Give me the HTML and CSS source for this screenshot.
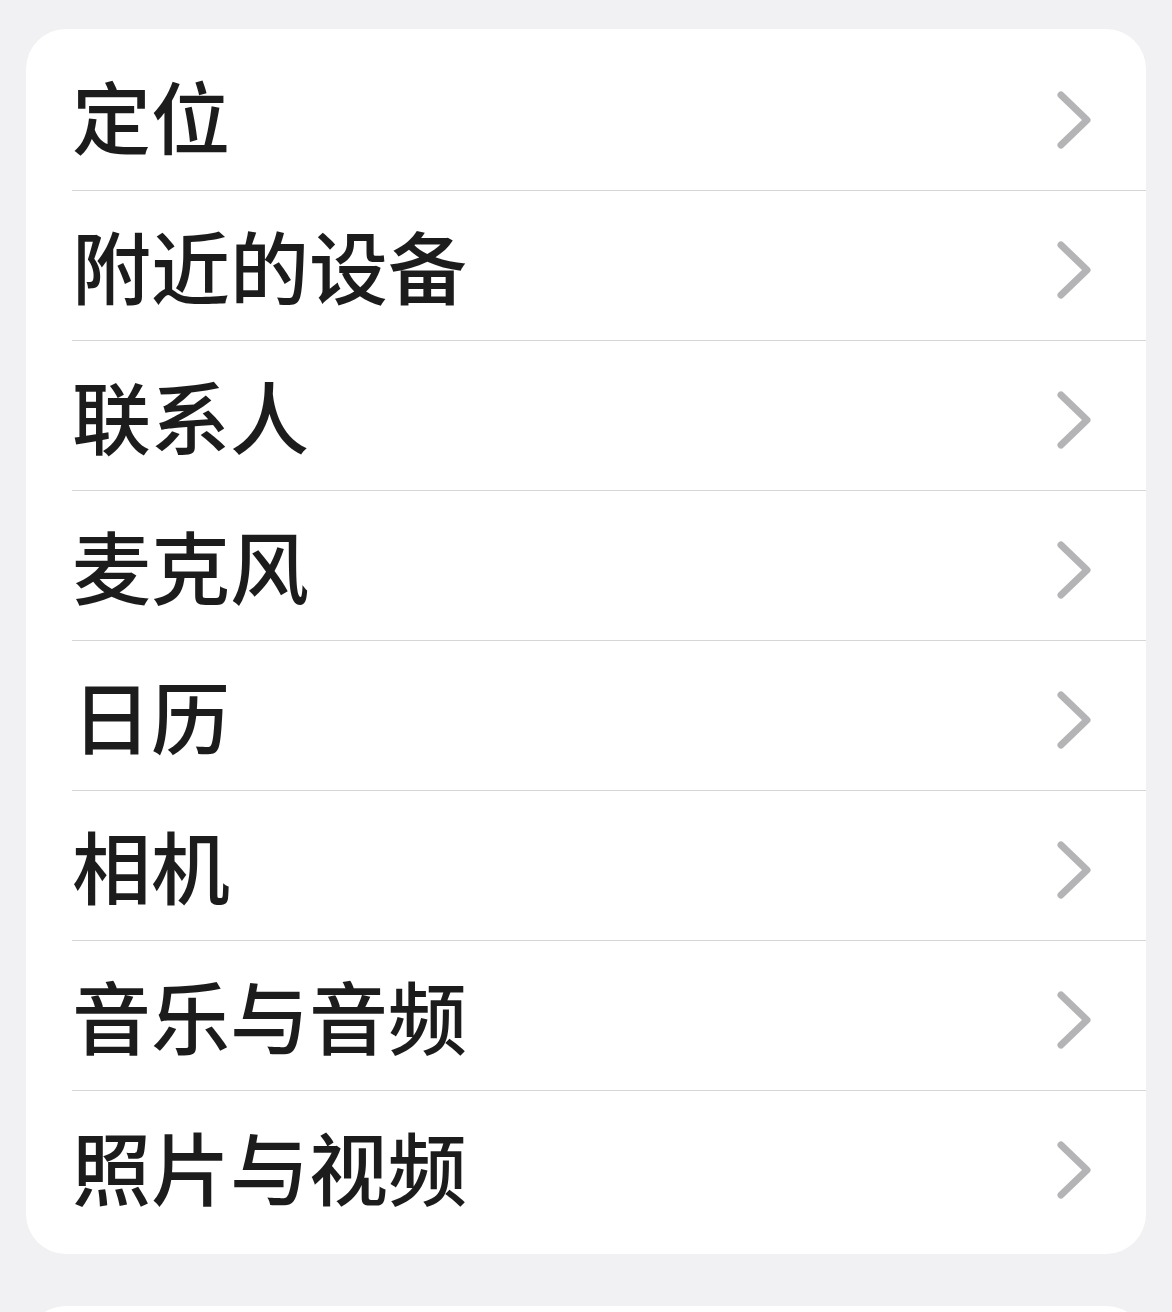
FILE: index.html
```html
<!DOCTYPE html>
<html lang="zh-CN">
<head>
    <meta charset="utf-8">
    <meta name="viewport" content="width=device-width, initial-scale=1">
    <title>隐私与安全性</title>
    <link rel="stylesheet" href="styles.css">
</head>
<body>
    <div class="page">
        <ul class="group">
            <li class="row"><span class="label">定位</span><svg class="chevron" viewBox="0 0 44 66"><polyline points="11,8 37,33 11,58"/></svg></li>
            <li class="row"><span class="label">附近的设备</span><svg class="chevron" viewBox="0 0 44 66"><polyline points="11,8 37,33 11,58"/></svg></li>
            <li class="row"><span class="label">联系人</span><svg class="chevron" viewBox="0 0 44 66"><polyline points="11,8 37,33 11,58"/></svg></li>
            <li class="row"><span class="label">麦克风</span><svg class="chevron" viewBox="0 0 44 66"><polyline points="11,8 37,33 11,58"/></svg></li>
            <li class="row"><span class="label">日历</span><svg class="chevron" viewBox="0 0 44 66"><polyline points="11,8 37,33 11,58"/></svg></li>
            <li class="row"><span class="label">相机</span><svg class="chevron" viewBox="0 0 44 66"><polyline points="11,8 37,33 11,58"/></svg></li>
            <li class="row"><span class="label">音乐与音频</span><svg class="chevron" viewBox="0 0 44 66"><polyline points="11,8 37,33 11,58"/></svg></li>
            <li class="row"><span class="label">照片与视频</span><svg class="chevron" viewBox="0 0 44 66"><polyline points="11,8 37,33 11,58"/></svg></li>
        </ul>
        <ul class="group next"></ul>
    </div>
</body>
</html>
```

FILE: styles.css
```css
body {
    margin: 0;
    background-color: #f1f1f3;
    font-family: "Noto Sans CJK SC", "Noto Sans", sans-serif;
    color: #1c1c1c;
}
.page {
    padding: 29px 26px 0;
    height: 1312px;
    box-sizing: border-box;
    overflow: hidden;
}
.group {
    list-style: none;
    margin: 0;
    padding: 12px 0 13px;
    background: #fff;
    border-radius: 40px;
}
.group.next {
    margin-top: 52px;
    height: 80px;
}
.row {
    display: flex;
    align-items: center;
    justify-content: space-between;
    height: 150px;
    box-sizing: border-box;
    padding: 8px 52px 0 0;
    margin-left: 46px;
    border-bottom: 1px solid #d6d6d8;
}
.row:last-child {
    border-bottom: none;
}
.label {
    font-size: 79px;
    font-weight: 500;
    line-height: 1;
    padding-bottom: 10px;
}
.chevron {
    width: 44px;
    height: 66px;
    fill: none;
    stroke: #b4b4b6;
    stroke-width: 7;
    stroke-linecap: round;
    stroke-linejoin: round;
}
```
